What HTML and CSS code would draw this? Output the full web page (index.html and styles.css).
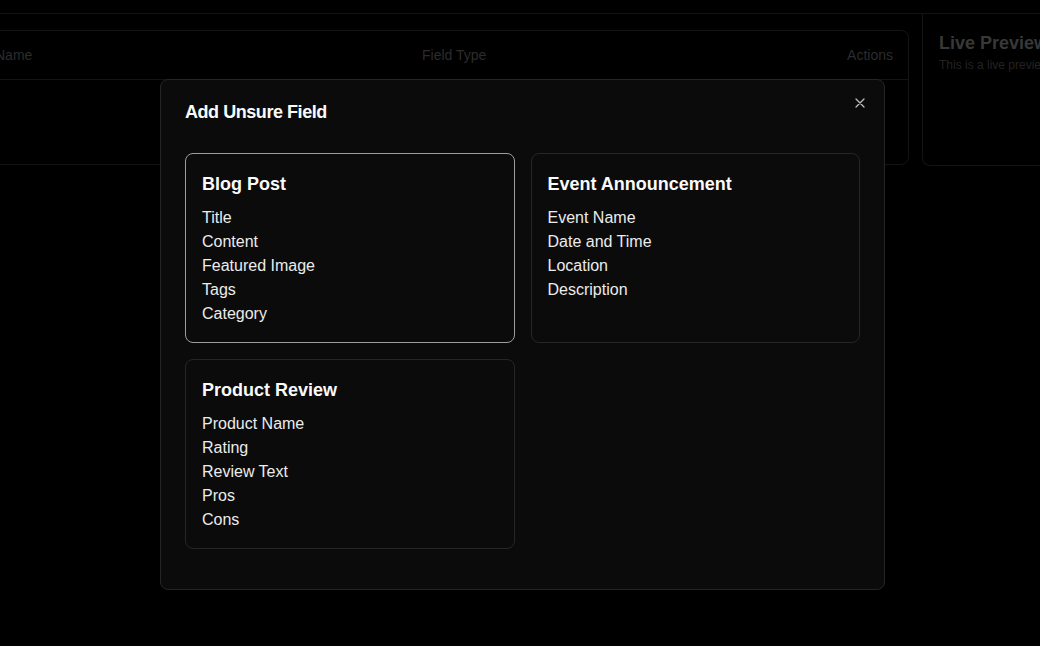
FILE: index.html
```html
<!DOCTYPE html>
<html>
<head>
<meta charset="utf-8">
<link rel="stylesheet" href="styles.css">
</head>
<body>
<div class="page">
  <div class="topbar"></div>
  <div class="main">
    <div class="table-card">
      <div class="thead">
        <div class="th">Name</div>
        <div class="th">Field Type</div>
        <div class="th th-right">Actions</div>
      </div>
      <div class="tbody"></div>
    </div>
    <div class="preview-card">
      <div class="preview-title">Live Preview</div>
      <div class="preview-sub">This is a live preview of your form</div>
    </div>
  </div>
</div>

<div class="overlay">
  <div class="modal">
    <div class="modal-head">
      <h2 class="modal-title">Add Unsure Field</h2>
      <button class="close" aria-label="Close">
        <svg width="10" height="10" viewBox="0 0 10 10"><path d="M1 1L9 9M9 1L1 9" stroke="#bdbdbd" stroke-width="1.3" fill="none" stroke-linecap="round"/></svg>
      </button>
    </div>
    <div class="grid">
      <div class="card card-active">
        <h3 class="card-title">Blog Post</h3>
        <ul class="fields">
          <li>Title</li>
          <li>Content</li>
          <li>Featured Image</li>
          <li>Tags</li>
          <li>Category</li>
        </ul>
      </div>
      <div class="card">
        <h3 class="card-title">Event Announcement</h3>
        <ul class="fields">
          <li>Event Name</li>
          <li>Date and Time</li>
          <li>Location</li>
          <li>Description</li>
        </ul>
      </div>
      <div class="card">
        <h3 class="card-title">Product Review</h3>
        <ul class="fields">
          <li>Product Name</li>
          <li>Rating</li>
          <li>Review Text</li>
          <li>Pros</li>
          <li>Cons</li>
        </ul>
      </div>
    </div>
  </div>
</div>
</body>
</html>
```

FILE: styles.css
```css
* { box-sizing: border-box; }
html, body {
  margin: 0;
  padding: 0;
  background: #000;
  font-family: "Liberation Sans", Arial, sans-serif;
  overflow: hidden;
  height: 100%;
}
.page {
  width: 1040px;
  height: 646px;
  overflow: hidden;
}
.topbar {
  height: 14px;
  border-bottom: 1px solid #121212;
}
.main {
  display: flex;
  gap: 13px;
  align-items: flex-start;
}
.table-card {
  flex: 0 0 931px;
  margin-left: -22px;
  margin-top: 16px;
  border: 1px solid #141414;
  border-radius: 8px;
}
.thead {
  display: grid;
  grid-template-columns: 427px 1fr auto;
  padding: 0 15px 0 16px;
  height: 49px;
  align-items: center;
  border-bottom: 1px solid #141414;
}
.th {
  font-size: 14px;
  color: #2c2c2c;
}
.th-right { text-align: right; }
.tbody {
  height: 84px;
}
.preview-card {
  flex: 0 0 200px;
  height: 152px;
  border: 1px solid #141414;
  border-top: none;
  border-radius: 0 0 8px 8px;
  padding: 18px 16px;
}
.preview-title {
  font-size: 18px;
  font-weight: bold;
  color: #383838;
  white-space: nowrap;
  line-height: 22px;
}
.preview-sub {
  font-size: 12px;
  color: #232323;
  white-space: nowrap;
  margin-top: 4px;
}
.overlay {
  position: fixed;
  inset: 0;
}
.modal {
  position: absolute;
  left: 160px;
  top: 79px;
  width: 725px;
  height: 511px;
  background: #0b0b0b;
  border: 1px solid #252525;
  border-radius: 8px;
  padding: 21px 24px 24px;
}
.modal-head {
  display: flex;
  justify-content: space-between;
  align-items: flex-start;
  height: 52px;
}
.modal-title {
  margin: 0;
  font-size: 18px;
  font-weight: bold;
  line-height: 22px;
  letter-spacing: -0.45px;
  color: #fafafa;
}
.close {
  background: none;
  border: none;
  padding: 0;
  margin-top: -3px;
  margin-right: -5px;
  width: 10px;
  height: 10px;
  display: flex;
}
.grid {
  display: grid;
  grid-template-columns: 1fr 1fr;
  gap: 16px;
}
.card {
  border: 1px solid #262626;
  border-radius: 8px;
  padding: 16px 16px 15px;
  height: 190px;
}
.card-active {
  border-color: #9e9e9e;
}
.card-title {
  margin: 0;
  font-size: 18px;
  font-weight: bold;
  line-height: 28px;
  color: #fafafa;
}
.fields {
  list-style: none;
  margin: 8px 0 0;
  padding: 0;
}
.fields li {
  font-size: 16px;
  line-height: 24px;
  color: #ececec;
}
```
